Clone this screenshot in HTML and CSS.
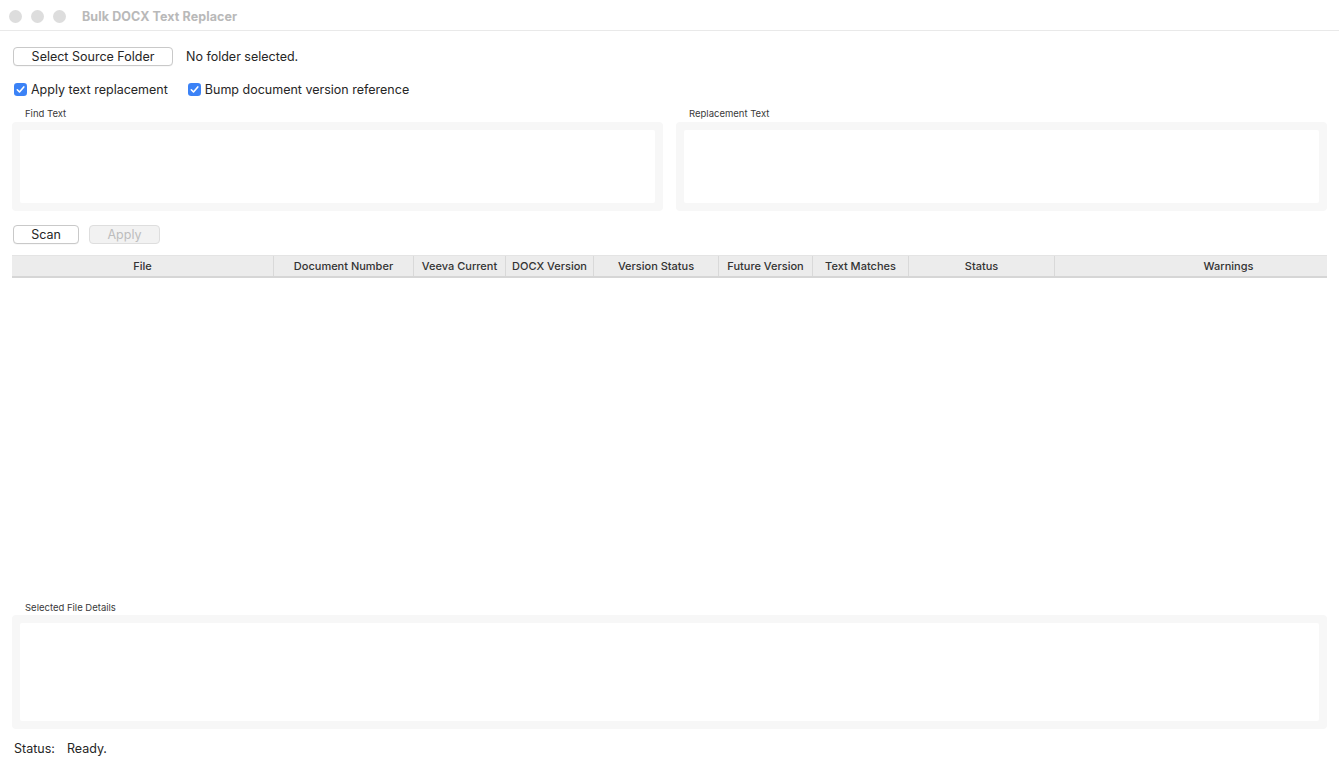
FILE: index.html
```html
<!DOCTYPE html>
<html lang="en">
<head>
<meta charset="utf-8">
<title>Bulk DOCX Text Replacer</title>
<link rel="stylesheet" href="styles.css">
</head>
<body>
<div class="window">
  <header class="titlebar">
    <span class="light"></span><span class="light"></span><span class="light"></span>
    <span class="title">Bulk DOCX Text Replacer</span>
  </header>
  <main class="content">
    <div class="folder-row">
      <button class="btn btn-folder">Select Source Folder</button>
      <span class="folder-text">No folder selected.</span>
    </div>
    <div class="check-row">
      <label class="check">
        <svg class="cb" viewBox="0 0 13 13" width="13" height="13"><rect x="0" y="0" width="13" height="13" rx="3.2" fill="#3b82f6"/><path d="M3.3 6.8 L5.5 9 L9.8 3.9" fill="none" stroke="#fff" stroke-width="1.6" stroke-linecap="round" stroke-linejoin="round"/></svg>
        <span>Apply text replacement</span>
      </label>
      <label class="check">
        <svg class="cb" viewBox="0 0 13 13" width="13" height="13"><rect x="0" y="0" width="13" height="13" rx="3.2" fill="#3b82f6"/><path d="M3.3 6.8 L5.5 9 L9.8 3.9" fill="none" stroke="#fff" stroke-width="1.6" stroke-linecap="round" stroke-linejoin="round"/></svg>
        <span>Bump document version reference</span>
      </label>
    </div>
    <div class="text-grid">
      <div class="field">
        <div class="field-label">Find Text</div>
        <div class="box"><div class="box-inner"></div></div>
      </div>
      <div class="field">
        <div class="field-label">Replacement Text</div>
        <div class="box"><div class="box-inner"></div></div>
      </div>
    </div>
    <div class="action-row">
      <button class="btn btn-scan">Scan</button>
      <button class="btn btn-apply" disabled>Apply</button>
    </div>
    <div class="table">
      <div class="thead">
        <div class="th c-file">File</div>
        <div class="th c-doc">Document Number</div>
        <div class="th c-veeva">Veeva Current</div>
        <div class="th c-docx">DOCX Version</div>
        <div class="th c-vstat">Version Status</div>
        <div class="th c-future">Future Version</div>
        <div class="th c-matches">Text Matches</div>
        <div class="th c-status">Status</div>
        <div class="th c-warn">Warnings</div>
      </div>
      <div class="tbody"></div>
    </div>
    <div class="details">
      <div class="field-label">Selected File Details</div>
      <div class="box box-details"><div class="box-inner"></div></div>
    </div>
    <div class="status-row">
      <span class="status-key">Status:</span>
      <span class="status-val">Ready.</span>
    </div>
  </main>
</div>
</body>
</html>
```

FILE: styles.css
```css
* { box-sizing: border-box; }
html, body { margin: 0; padding: 0; background: #ffffff; }
body {
  font-family: Inter, "Liberation Sans", "DejaVu Sans", sans-serif;
  color: #262626;
  font-size: 13px;
}
.window {
  width: 1339px;
  height: 768px;
  display: flex;
  flex-direction: column;
  overflow: hidden;
}
.titlebar {
  height: 31px;
  flex: 0 0 31px;
  border-bottom: 1px solid #e9e9e9;
  display: flex;
  align-items: center;
  padding-left: 9px;
  padding-top: 2px;
  gap: 9px;
}
.light {
  width: 13px;
  height: 13px;
  border-radius: 50%;
  background: #dddddd;
}
.title {
  margin-left: 7px;
  font-weight: 700;
  font-size: 12.5px;
  color: #b9b9b9;
  letter-spacing: 0.1px;
}
.content {
  flex: 1;
  display: flex;
  flex-direction: column;
  padding: 0 12px 12px 12px;
  min-height: 0;
}
.btn {
  font-family: inherit;
  font-size: 12.5px;
  height: 19px;
  background: #ffffff;
  border: 1px solid #c9c9c9;
  border-radius: 4px;
  color: #262626;
  padding: 0;
  line-height: 17px;
  box-shadow: 0 0.5px 0.5px rgba(0,0,0,0.06);
}
.folder-row {
  margin-top: 16px;
  display: flex;
  align-items: center;
  padding-left: 1px;
}
.btn-folder { width: 160px; }
.folder-text { margin-left: 13px; font-size: 12.5px; }
.check-row {
  margin-top: 15px;
  height: 17px;
  display: flex;
  align-items: center;
  gap: 20px;
  padding-left: 2px;
}
.check {
  display: flex;
  align-items: center;
  gap: 4px;
  font-size: 12.5px;
}
.cb { display: block; }
.text-grid {
  margin-top: 9px;
  display: grid;
  grid-template-columns: 1fr 1fr;
  column-gap: 13px;
}
.field-label {
  font-size: 9.5px;
  color: #3a3a3a;
  padding-left: 13px;
  height: 13px;
  line-height: 13px;
  margin-bottom: 2px;
}
.box {
  background: #f7f7f7;
  border-radius: 4px;
  padding: 8px;
  height: 89px;
}
.box-inner {
  background: #ffffff;
  border-radius: 2px;
  height: 100%;
}
.action-row {
  margin-top: 14px;
  display: flex;
  gap: 10px;
  padding-left: 1px;
}
.btn-scan { width: 66px; }
.btn-apply {
  width: 71px;
  background: #f2f2f2;
  border-color: #dedede;
  color: #bdbdbd;
  box-shadow: none;
}
.table {
  margin-top: 11px;
  flex: 1;
  display: flex;
  flex-direction: column;
  min-height: 0;
}
.thead {
  height: 23px;
  display: flex;
  background: #ececec;
  border-top: 1px solid #e4e4e4;
  border-bottom: 2px solid #d6d6d6;
}
.th {
  font-size: 11px;
  font-weight: 500;
  color: #333333;
  display: flex;
  align-items: center;
  justify-content: center;
  border-left: 1px solid #d9d9d9;
  white-space: nowrap;
}
.c-file { width: 261px; border-left: none; }
.c-doc { width: 140px; }
.c-veeva { width: 92px; }
.c-docx { width: 88px; }
.c-vstat { width: 125px; }
.c-future { width: 94px; }
.c-matches { width: 96px; }
.c-status { width: 146px; }
.c-warn { width: 273px; padding-left: 75px; }
.tbody { flex: 1; }
.box-details { height: 114px; }
.details .field-label { margin-bottom: 1px; }
.status-row {
  margin-top: 11px;
  height: 16px;
  display: flex;
  align-items: center;
  font-size: 12.5px;
  padding-left: 2px;
  gap: 12px;
}
```
